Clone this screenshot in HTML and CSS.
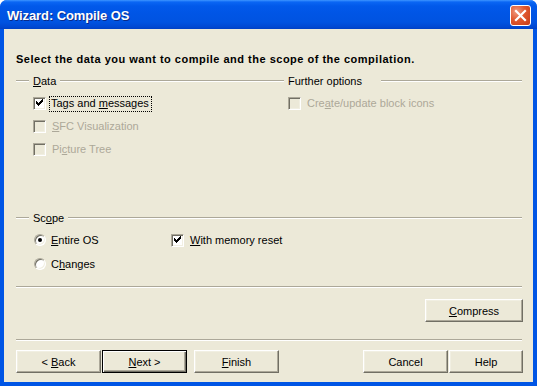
FILE: index.html
```html
<!DOCTYPE html>
<html>
<head>
<meta charset="utf-8">
<link rel="stylesheet" href="styles.css">
</head>
<body>
<div class="window">
  <div class="titlebar">
    <span class="title">Wizard: Compile OS</span>
    <span class="close"><svg width="13" height="13" viewBox="0 0 13 13"><path d="M2 2 L11 11 M11 2 L2 11" stroke="#fff" stroke-width="2.2" stroke-linecap="square"/></svg></span>
  </div>
  <div class="client">
    <div class="heading">Select the data you want to compile and the scope of the compilation.</div>
    <div class="groups">
      <div class="group data">
        <div class="ghead"><span class="lead"></span><span class="glabel"><u>D</u>ata</span><span class="tail"></span></div>
        <div class="row"><span class="cb checked"></span><span class="lbl focus">Tags and <u>m</u>essages</span></div>
        <div class="row disabled"><span class="cb"></span><span class="lbl"><u>S</u>FC Visualization</span></div>
        <div class="row disabled"><span class="cb"></span><span class="lbl">Pi<u>c</u>ture Tree</span></div>
      </div>
      <div class="group further">
        <div class="ghead"><span class="lead"></span><span class="glabel">Further options</span><span class="tail gap"></span></div>
        <div class="row disabled"><span class="cb"></span><span class="lbl">Cre<u>a</u>te/update block icons</span></div>
      </div>
    </div>
    <div class="ghead scope"><span class="lead"></span><span class="glabel">Sc<u>o</u>pe</span><span class="tail"></span></div>
    <div class="scopegrid">
      <div class="row radrow"><span class="rb on"></span><span class="lbl"><u>E</u>ntire OS</span></div>
      <div class="row"><span class="cb checked"></span><span class="lbl"><u>W</u>ith memory reset</span></div>
      <div class="row radrow"><span class="rb"></span><span class="lbl">C<u>h</u>anges</span></div>
    </div>
    <div class="sep sep1"></div>
    <div class="compress-row"><button class="btn compress"><u>C</u>ompress</button></div>
    <div class="sep sep2"></div>
    <div class="buttons">
      <button class="btn"><span>&lt; <u>B</u>ack</span></button>
      <button class="btn default"><span><u>N</u>ext &gt;</span></button>
      <button class="btn finish"><span><u>F</u>inish</span></button>
      <span class="spacer"></span>
      <button class="btn"><span>Cancel</span></button>
      <button class="btn help"><span>Help</span></button>
    </div>
  </div>
</div>
</body>
</html>
```

FILE: styles.css
```css
html, body {
  margin: 0;
  padding: 0;
  background: #ffffff;
}
body {
  width: 537px;
  height: 386px;
  overflow: hidden;
  font-family: "Liberation Sans", Arial, sans-serif;
  font-size: 11px;
  color: #000;
}
.window {
  width: 537px;
  height: 386px;
  display: flex;
  flex-direction: column;
  border-radius: 7px 7px 0 0;
  overflow: hidden;
  background: #0055e5;
}
.titlebar {
  height: 29px;
  flex: none;
  display: flex;
  align-items: center;
  justify-content: space-between;
  padding: 0 6px 0 7px;
  background: linear-gradient(#3d95ff 0px, #0a66f4 2px, #0159ea 6px, #0055e5 14px, #0053e1 22px, #0048d2 27px, #0040c4 29px);
}
.title {
  color: #fff;
  font-weight: bold;
  font-size: 13px;
  letter-spacing: -0.1px;
  text-shadow: 1px 1px 0 #0a2a88;
  margin-top: 1px;
}
.close {
  width: 19px;
  height: 19px;
  border: 1px solid #fff;
  border-radius: 3px;
  background: radial-gradient(circle at 30% 30%, #f09a80 0%, #e0582f 45%, #c53a16 100%);
  display: flex;
  align-items: center;
  justify-content: center;
  margin-top: 1px;
}
.client {
  flex: 1;
  background: #ece9d8;
  margin: 0 4px 4px 4px;
  padding: 23px 11px 0 12px;
  display: flex;
  flex-direction: column;
}
.heading {
  font-weight: bold;
  height: 14px;
  line-height: 14px;
  letter-spacing: 0.5px;
}
.groups {
  display: flex;
  margin-top: 8px;
}
.group.data { width: 255px; }
.group.further { flex: 1; }
.ghead {
  display: flex;
  align-items: center;
  height: 14px;
}
.lead, .tail, .sep {
  height: 0;
  border-top: 1px solid #aca899;
  border-bottom: 1px solid #ffffff;
}
.lead { width: 13px; flex: none; }
.tail { flex: 1; }
.tail.gap { margin-left: 15px; }
.glabel {
  padding: 0 4px;
  line-height: 14px;
}
.row {
  height: 23px;
  display: flex;
  align-items: center;
  padding-left: 17px;
}
.group .ghead + .row { margin-top: 4px; }
.cb {
  width: 13px;
  height: 13px;
  box-sizing: border-box;
  flex: none;
  background: #fff;
  border-top: 1px solid #aca899;
  border-left: 1px solid #aca899;
  border-right: 1px solid #fff;
  border-bottom: 1px solid #fff;
  box-shadow: inset 1px 1px 0 #716f64, inset -1px -1px 0 #f1efe2;
  position: relative;
}
.cb.checked::after {
  content: "";
  position: absolute;
  left: 2px;
  top: 1px;
  width: 7px;
  height: 7px;
  background: url("data:image/svg+xml;utf8,<svg xmlns='http://www.w3.org/2000/svg' width='7' height='7'><path d='M0 2h1v1h1v1h1V3h1V2h1V1h1V0h1v3h-1v1h-1v1h-1v1h-1v1h-1V6H1V5H0z' fill='black'/></svg>") no-repeat;
}
.disabled .cb { background: #ece9d8; }
.disabled .lbl { color: #aca899; }
.lbl {
  margin-left: 5px;
  line-height: 13px;
  padding: 0 1px;
}
.lbl.focus {
  outline: 1px dotted #000;
  outline-offset: 0;
  margin-left: 4px;
  padding: 0 2px 1px 1px;
}
.ghead.scope { margin-top: 50px; }
.scopegrid {
  display: grid;
  grid-template-columns: 155px 1fr;
  margin-top: 3px;
}
.scopegrid .row { height: 24px; }
.scopegrid .row + .row { padding-left: 0; }
.scopegrid .row.radrow { padding-left: 17px; }
.rb {
  width: 12px;
  height: 12px;
  border-radius: 50%;
  flex: none;
  box-sizing: border-box;
  background: #fff;
  border: 1px solid;
  border-color: #aca899 #fff #fff #aca899;
  box-shadow: inset 1px 1px 0 #716f64, inset -1px -1px 0 #f1efe2;
  position: relative;
  margin-left: 1px;
}
.rb.on::after {
  content: "";
  position: absolute;
  left: 3px;
  top: 3px;
  width: 4px;
  height: 4px;
  border-radius: 50%;
  background: #000;
}
.radrow .lbl { margin-left: 4px; }
.sep { flex: none; }
.sep1 { margin-top: 10px; }
.sep2 { margin-top: 17px; }
.compress-row {
  display: flex;
  justify-content: flex-end;
  margin-top: 11px;
  margin-right: -1px;
}
.btn {
  font-family: "Liberation Sans", Arial, sans-serif;
  font-size: 11px;
  color: #000;
  height: 23px;
  width: 85px;
  background: #ece9d8;
  border: 1px solid;
  border-color: #fff #716f64 #716f64 #fff;
  box-shadow: inset -1px -1px 0 #aca899, inset 1px 1px 0 #f1efe2;
  padding: 0;
  margin: 0;
  box-sizing: border-box;
  display: flex;
  align-items: center;
  justify-content: center;
}
.btn.compress { width: 98px; }
.btn.default {
  border: 1px solid #000;
  box-shadow: inset 1px 1px 0 #fff, inset -1px -1px 0 #716f64, inset -2px -2px 0 #aca899;
}
.buttons {
  display: flex;
  margin-top: 9px;
  gap: 1px;
  margin-right: -1px;
}
.btn.finish { margin-left: 6px; }
.spacer { flex: 1; }
.btn.help { width: 74px; }
u { text-decoration-thickness: 1px; text-underline-offset: 1px; }
```
